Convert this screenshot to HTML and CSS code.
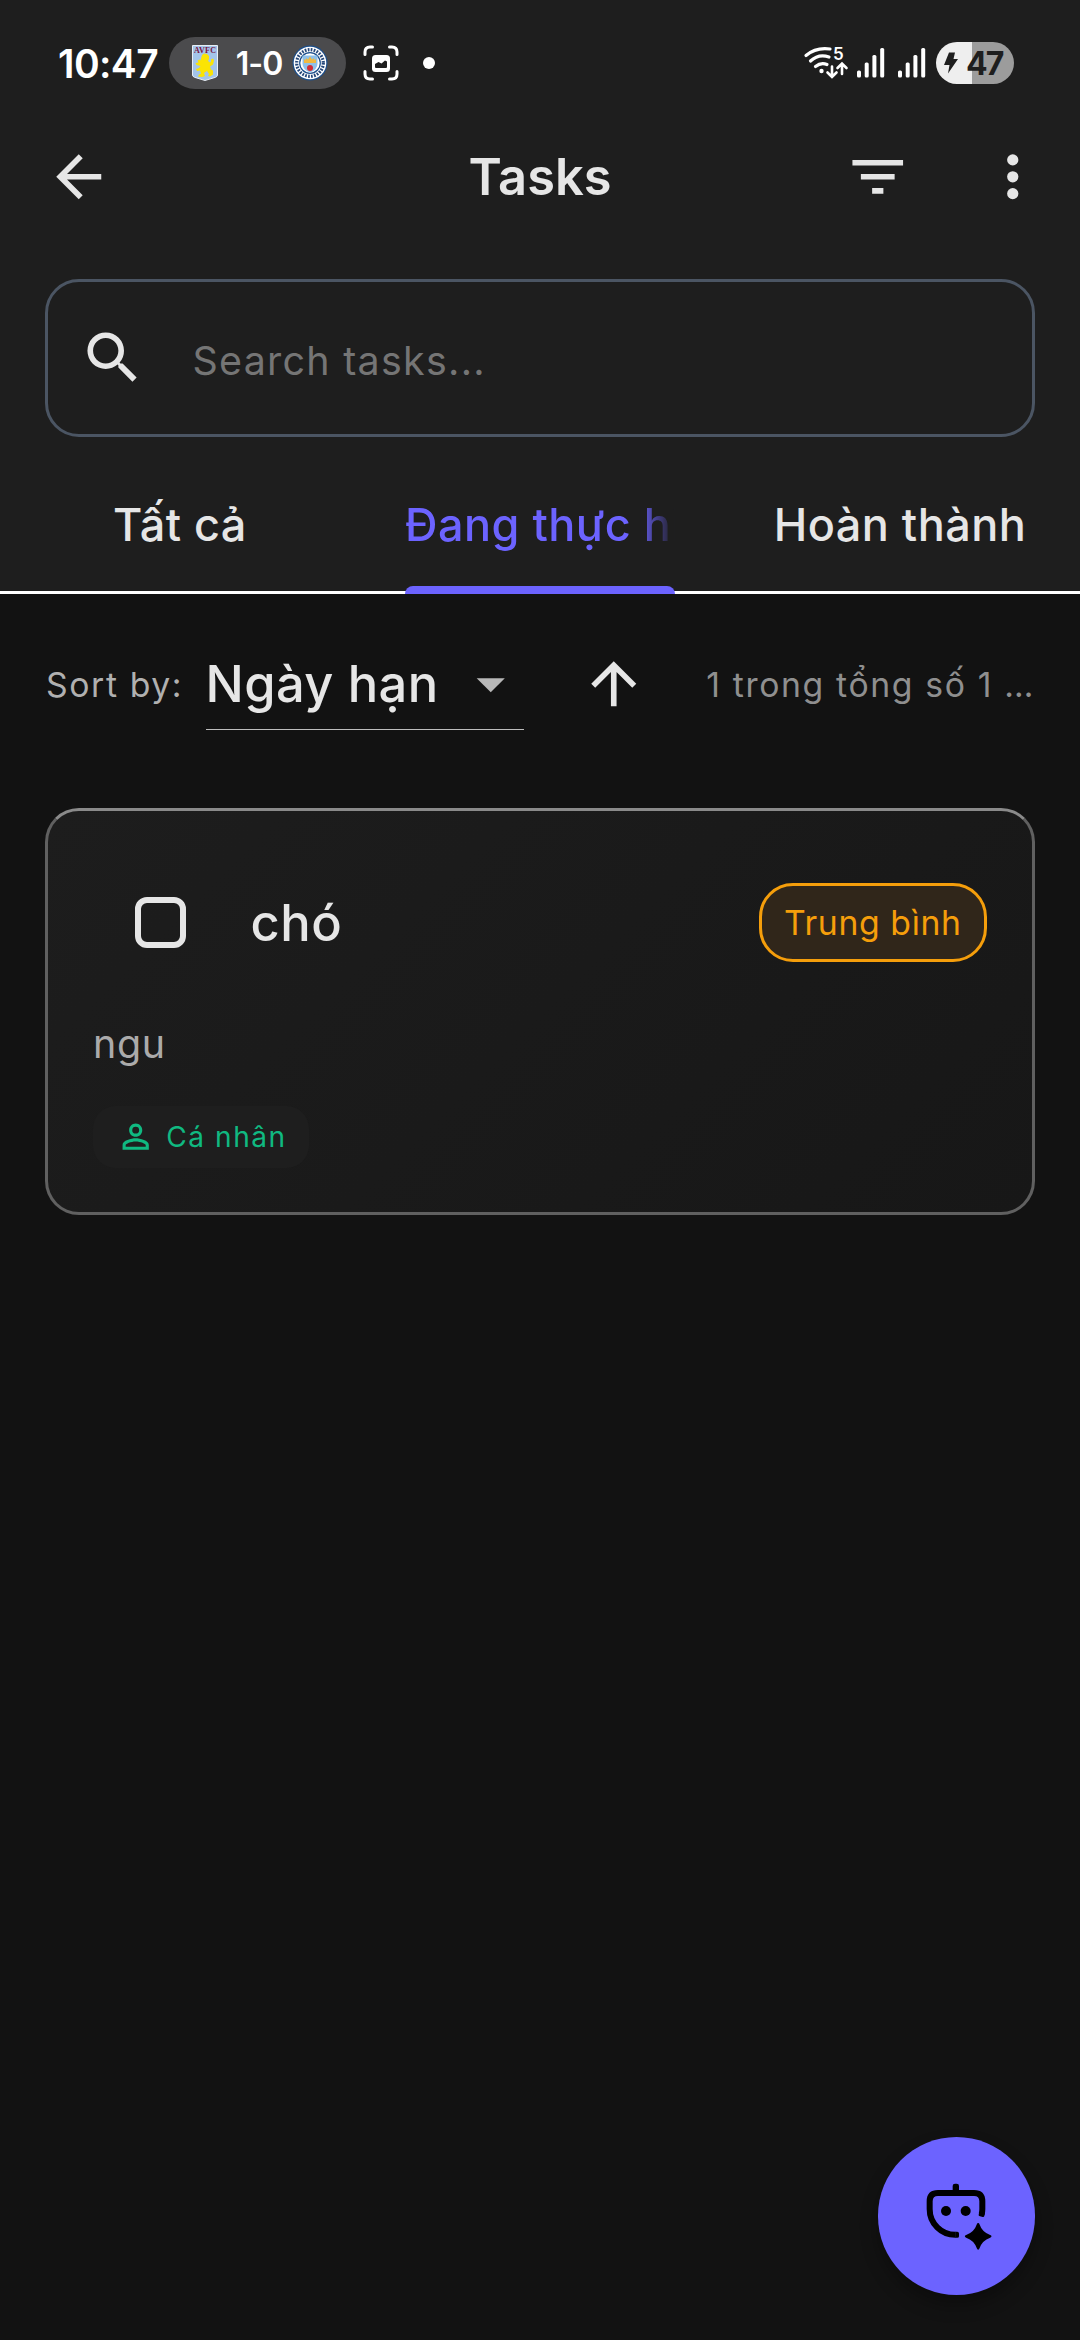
FILE: index.html
```html
<!DOCTYPE html>
<html lang="vi">
<head>
<meta charset="utf-8">
<title>Tasks</title>
<link rel="stylesheet" href="styles.css">
</head>
<body>
<div class="screen">
  <header class="top">
    <div class="status">
      <span class="clock">10:47</span>
      <div class="score">
        <svg class="crest" viewBox="0 0 26 36"><path d="M.5.5h25v29.500q0 1.500-2 2.300L13 35.500 2.500 32.300q-2-.8-2-2.300z" fill="#a3c5ea" stroke="#e8eef5"/><text x="13" y="7.800" text-anchor="middle" textLength="22" class="crest-name">AVFC</text><path d="M10 10l2-1.500 3 .5 2 2v3l-1 2 2 1.500 1-1v-2l2-1 1 2-1 4-3 2 1 3 2 1v4l-3 2-2-.5 1-2-2-3-3 2 1 3-3 1-4-.5 1-2 2-1-1-3-3 .5-1-2 3-1 1.500-2-4-1-1-2 3-.5-1-2 2-1 1 1z" fill="#fbe405"/></svg>
        <span class="result">1-0</span>
        <svg class="city" viewBox="0 0 36 36"><circle cx="18" cy="18" r="17.500" fill="#1c4f8c"/><circle cx="18" cy="18" r="16.300" fill="#fff"/><circle cx="18" cy="18" r="13.300" fill="none" stroke="#24477a" stroke-width="3.200" stroke-dasharray="1.700 1.300"/><circle cx="18" cy="18" r="10.300" fill="#fff" stroke="#1c4f8c" stroke-width="1.200"/><path d="M10.500 10.500h15v8q0 6-7.500 9-7.500-3-7.500-9z" fill="#8fc1ea"/><path d="M12 18v-4l2 1v-2l2 1.500 2-3 2 3 2-1.500v2l2-1v4z" fill="#f0b942"/><circle cx="18" cy="23" r="3" fill="#d22c35"/></svg>
      </div>
      <svg class="shot" viewBox="0 0 36 36" fill="none" stroke="#fff" stroke-width="3" stroke-linecap="round"><path d="M2 9.500V7q0-5 5-5h2.500M26.500 2H29q5 0 5 5v2.500M34 26.500V29q0 5-5 5h-2.500M9.500 34H7q-5 0-5-5v-2.500"/><rect x="9" y="10" width="18" height="17" rx="3.500" fill="#fff" stroke="none"/><path d="M12 22v-3l3.500-2 3 1.500 3.500-3 2 1V22q0 1-1 1H13q-1 0-1-1z" fill="#1e1e1e" stroke="none"/></svg>
      <span class="dot"></span>
      <span class="grow"></span>
      <svg class="wifi" viewBox="0 0 44 34" fill="none" stroke="#fff" stroke-width="3.200" stroke-linecap="round"><path d="M2 9.500Q12 1 26 3M6.500 15Q14.500 7.500 25 11M11.500 20.500q5.500-4.500 11.500-2"/><circle cx="17.500" cy="25" r="2.200" fill="#fff" stroke="none"/><path d="M28 20.500V30M23.500 26.500L28 31l4.500-4.500M38 28V18.500M33.500 22L38 17.500l4.500 4.500" stroke-width="2.600"/><text x="29" y="14" class="wifi-band">5</text></svg>
      <svg class="signal" viewBox="0 0 28 30" fill="#fff"><rect y="22.500" width="4" height="7" rx="1.500"/><rect x="7.700" y="14.500" width="4" height="15" rx="1.500"/><rect x="15.400" y="7" width="4" height="22.500" rx="1.500"/><rect x="23.200" width="4" height="29.500" rx="1.500"/></svg>
      <svg class="signal second" viewBox="0 0 28 30" fill="#fff"><rect y="22.500" width="4" height="7" rx="1.500"/><rect x="7.700" y="14.500" width="4" height="15" rx="1.500"/><rect x="15.400" y="7" width="4" height="22.500" rx="1.500"/><rect x="23.200" width="4" height="29.500" rx="1.500"/></svg>
      <div class="battery">
        <svg class="bolt" viewBox="0 0 14 22"><path d="M5 .5h6L9.500 7H14L4 21.500 5.500 13H0z" fill="#1e1e1e"/></svg>
        <span>47</span>
      </div>
    </div>
    <div class="appbar">
      <div class="lead"><svg class="icon" viewBox="0 0 24 24"><path d="M20 11H7.830l5.590-5.590L12 4l-8 8 8 8 1.410-1.410L7.830 13H20z"/></svg></div>
      <h1 class="title">Tasks</h1>
      <div class="action"><svg class="icon" viewBox="0 0 24 24"><path d="M10 18h4v-2h-4zM3 6v2h18V6zm3 7h12v-2H6z"/></svg></div>
      <div class="action"><svg class="icon" viewBox="0 0 24 24"><circle cx="12" cy="6" r="2"/><circle cx="12" cy="12" r="2"/><circle cx="12" cy="18" r="2"/></svg></div>
    </div>
    <div class="search">
      <svg class="icon" viewBox="0 0 24 24"><path d="M15.500 14h-.79l-.28-.27A6.471 6.471 0 0 0 16 9.500 6.500 6.500 0 1 0 9.500 16c1.610 0 3.090-.59 4.230-1.570l.27.28v.79l5 4.990L20.490 19zm-6 0C7.010 14 5 11.990 5 9.500S7.010 5 9.500 5 14 7.010 14 9.500 11.990 14 9.500 14z"/></svg>
      <span class="hint">Search tasks...</span>
    </div>
    <nav class="tabs">
      <div class="tab"><span>Tất cả</span></div>
      <div class="tab active"><span>Đang thực hiện</span></div>
      <div class="tab"><span>Hoàn thành</span></div>
    </nav>
  </header>
  <main class="body">
    <div class="sort">
      <span class="sort-label">Sort by:</span>
      <div class="select"><span>Ngày hạn</span><svg class="icon" viewBox="0 0 24 24"><path d="M7 10l5 5 5-5z"/></svg></div>
      <div class="action order"><svg class="icon" viewBox="0 0 24 24"><path d="M4 12l1.410 1.410L11 7.830V20h2V7.830l5.580 5.590L20 12l-8-8z"/></svg></div>
      <span class="count">1 trong tổng số 1 …</span>
    </div>
    <article class="card">
      <div class="card-head">
        <div class="check"><span class="box"></span></div>
        <h2 class="name">chó</h2>
        <span class="priority">Trung bình</span>
      </div>
      <p class="desc">ngu</p>
      <div class="chip">
        <svg viewBox="0 0 24 24"><path d="M12 5.900a2.100 2.100 0 1 1 0 4.200 2.100 2.100 0 0 1 0-4.200m0 9c2.970 0 6.100 1.460 6.100 2.100v1.100H5.900V17c0-.64 3.130-2.100 6.100-2.100M12 4C9.790 4 8 5.790 8 8s1.790 4 4 4 4-1.790 4-4-1.790-4-4-4zm0 9c-2.670 0-8 1.340-8 4v3h16v-3c0-2.660-5.330-4-8-4z"/></svg>
        <span>Cá nhân</span>
      </div>
    </article>
  </main>
  <div class="fab">
    <svg viewBox="0 0 210 210"><path d="M92 152.500A77 77 0 0 1 14 75V52Q14 27 39 27H147Q172 27 172 52V75Q172 83 170 90" fill="none" stroke="#000" stroke-width="18" stroke-linecap="butt"/><rect x="83" y="-1" width="19" height="30" rx="7"/><path d="M91 143.500h6q5 0 5 5v8q0 5-5 5h-6zM163 84l17 4-2 8q-1 4-5 3l-8-2q-5-1-4-5z"/><circle cx="63" cy="81" r="15"/><circle cx="122" cy="81" r="15"/><path d="M159.500 117q3 0 4 4 8 24 32 32 4 1 4 4t-4 4q-24 8-32 32-1 4-4 4t-4-4q-8-24-32-32-4-1-4-4t4-4q24-8 32-32 1-4 4-4z"/></svg>
  </div>
</div>
</body>
</html>
```
FILE: styles.css
```css
* { box-sizing: border-box; }
body { margin: 0; background: #121212; }
.screen {
  position: relative;
  width: 1080px;
  height: 2340px;
  overflow: hidden;
  background: #121212;
  color: #e6e6e6;
  font-family: Inter, "Noto Sans", sans-serif;
}
svg { display: block; overflow: visible; flex: none; }
.icon { width: 67.5px; height: 67.5px; fill: #e6e6e6; }
.top { height: 594px; background: #1e1e1e; }

.status { display: flex; align-items: center; height: 98px; padding: 28px 66px 0 58px; color: #fff; }
.clock { width: 111px; font-size: 39px; font-weight: 600; letter-spacing: -.6px; white-space: nowrap; }
.score { display: flex; align-items: center; width: 177px; height: 52px; padding: 0 18px 0 23px; border-radius: 26px; background: #4b4b4d; }
.crest { width: 26px; height: 36px; }
.crest-name { font: bold 8px "Liberation Serif", serif; fill: #7a1442; }
.result { flex: 1; padding-left: 8px; text-align: center; font-size: 32px; font-weight: 600; letter-spacing: -1px; }
.city { width: 36px; height: 36px; }
.shot { width: 36px; height: 36px; margin-left: 17px; }
.dot { width: 12px; height: 12px; margin-left: 24px; border-radius: 50%; background: #fff; }
.grow { flex: 1; }
.wifi { width: 44px; height: 34px; margin-right: 9px; }
.wifi-band { font: 600 17px Inter, sans-serif; fill: #fff; stroke: none; }
.signal { width: 28px; height: 30px; }
.second { margin: 0 10px 0 13px; }
.battery { display: flex; align-items: center; gap: 8px; width: 78px; height: 42px; padding-left: 8px; border-radius: 21px; background: linear-gradient(90deg, #eee 36px, #9c9c9c 36px); color: #1e1e1e; font-size: 32px; font-weight: 700; letter-spacing: -2px; }
.bolt { width: 14px; height: 22px; }

.appbar { display: flex; align-items: center; height: 157.5px; }
.lead { display: flex; justify-content: center; width: 270px; padding-right: 112.5px; }
.title { flex: 1; margin: 0; text-align: center; font-size: 50.6px; font-weight: 600; }
.action { display: flex; flex: none; justify-content: center; width: 135px; }

.search { display: flex; align-items: center; height: 157.5px; margin: 23.5px 45px 22.5px; padding-left: 31px; border: 3px solid #4b5563; border-radius: 34px; }
.hint { margin: 6px 0 0 46px; color: #757575; font-size: 39.4px; letter-spacing: 1.28px; }

.tabs { display: flex; height: 135px; box-shadow: inset 0 -3px #fff; }
.tab { position: relative; width: 360px; padding: 0 45px; line-height: 131px; text-align: center; font-size: 45px; font-weight: 450; letter-spacing: .48px; }
.tab span { display: block; overflow: hidden; white-space: nowrap; }
.active { color: #6c63ff; text-align: left; }
.active span { -webkit-mask-image: linear-gradient(90deg, #000 232px, transparent); mask-image: linear-gradient(90deg, #000 232px, transparent); }
.active::after { content: ""; position: absolute; left: 45px; right: 45px; bottom: 0; height: 8.5px; border-radius: 8.5px 8.5px 0 0; background: #6c63ff; }

.body { padding: 22.5px 45px; }
.sort { display: flex; align-items: center; gap: 22.5px; height: 135px; }
.sort-label { width: 138px; padding-left: 1px; color: #b0b0b0; font-size: 33.75px; letter-spacing: 1.6px; white-space: nowrap; }
.select { display: flex; align-items: center; justify-content: space-between; width: 320.5px; height: 92px; border-bottom: 1px solid #bdbdbd; font-size: 50.6px; font-weight: 450; letter-spacing: .42px; white-space: nowrap; }
.select .icon { fill: #b8b8b8; }
.count { flex: 1; padding-left: 2px; color: #8f8f8f; font-size: 33.75px; letter-spacing: 1.63px; white-space: nowrap; }

.card { height: 407px; margin-top: 56px; padding: 45px; border: 3px solid #606060; border-top-color: #8a8a8a; border-radius: 34px; background: linear-gradient(135deg, #1d1d1d, #171717); }
.card-head { display: flex; align-items: center; height: 134px; }
.check { display: flex; justify-content: center; width: 135px; }
.box { width: 51px; height: 51px; border: 6px solid #e6e6e6; border-radius: 12px; }
.name { flex: 1; margin: 0 0 0 22.5px; font-size: 50.6px; font-weight: 450; letter-spacing: .5px; }
.priority { display: flex; align-items: center; height: 79px; padding: 0 22.5px; border: 3px solid #f59e0b; border-radius: 34px; background: #30261a; color: #f59e0b; font-size: 33.75px; letter-spacing: .6px; }
.desc { margin: 24.5px 0 31.5px; color: #ababab; font-size: 39.4px; line-height: 60px; letter-spacing: .7px; }
.chip { display: inline-flex; align-items: center; gap: 11.25px; height: 62px; padding: 0 22.5px; border-radius: 22.5px; background: #1e1e1e; color: #10b981; font-size: 28.1px; letter-spacing: 1.55px; }
.chip svg { width: 39.4px; height: 39.4px; fill: #10b981; }

.fab { position: absolute; left: 877.5px; top: 2137px; display: flex; align-items: center; justify-content: center; width: 157.5px; height: 157.5px; padding: 7px 0 0 8px; border-radius: 50%; background: #6c63ff; box-shadow: 0 10px 18px rgba(0, 0, 0, .3); }
.fab svg { width: 70px; height: 70px; }
```
